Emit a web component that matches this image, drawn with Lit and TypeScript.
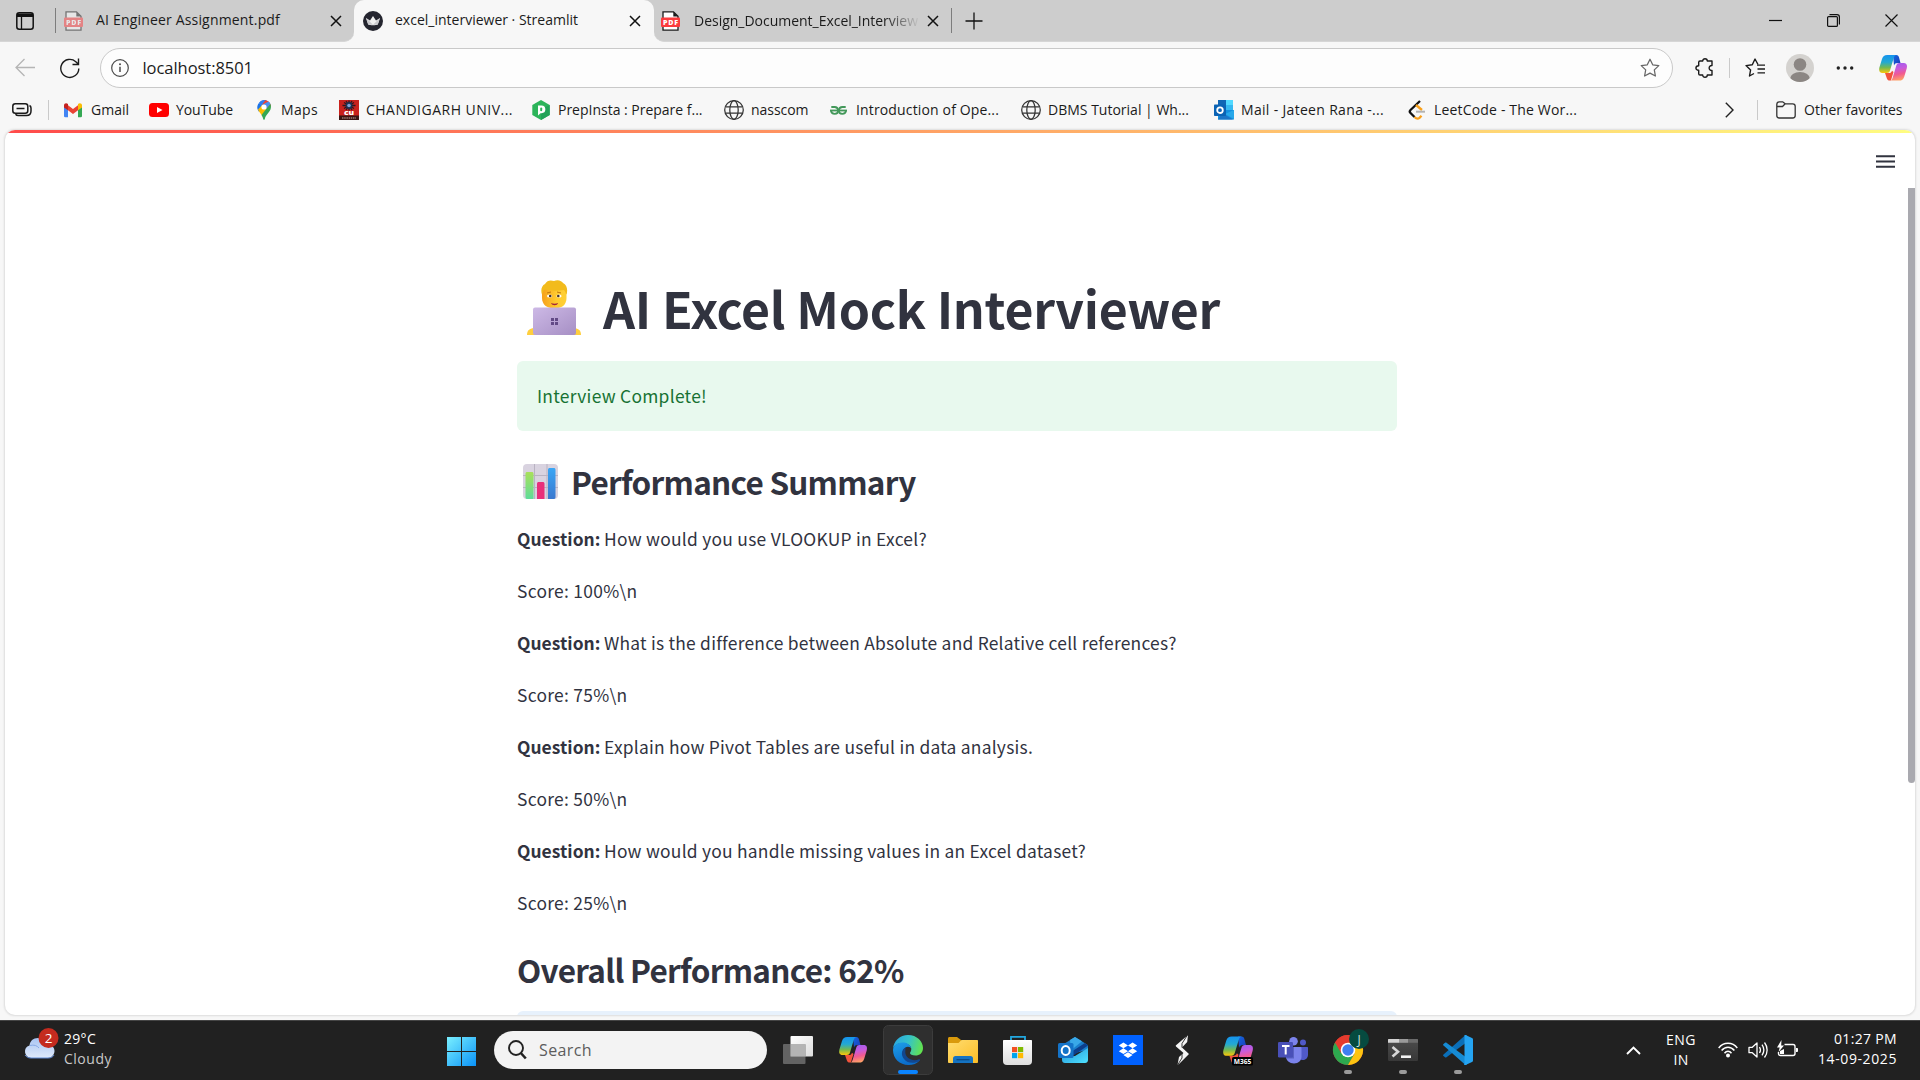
import { LitElement, html, svg, css } from "lit";
import { customElement, property } from "lit/decorators.js";

/** A single line of text tracked so that it spans a given width. */
@customElement("fit-text")
class FitText extends LitElement {
  @property() text = "";
  @property({ type: Number }) w = 0;
  static styles = css`
    :host { display: inline-block; white-space: pre; flex: none; }
  `;
  updated() {
    const el = this.renderRoot.querySelector("span") as HTMLElement;
    el.style.letterSpacing = "0px";
    const natural = el.getBoundingClientRect().width;
    if (this.w) {
      el.style.letterSpacing = `${(this.w - natural) / this.text.length}px`;
      this.style.width = `${this.w}px`;
    }
  }
  render() {
    return html`<span>${this.text}</span>`;
  }
}

const t = (text: string, w: number) => html`<fit-text .text=${text} .w=${w}></fit-text>`;

const icon = (w: number, h: number, body: unknown) =>
  html`<svg class="icon" width=${w} height=${h} viewBox="0 0 ${w} ${h}" fill="none">${body}</svg>`;

const closeIcon = icon(12, 12, svg`<path d="M1 1l10 10M11 1L1 11" stroke="#111" stroke-width="1.5"/>`);

const pdfIcon = icon(20, 20, svg`
  <path d="M2 .8h10.5L17 5.300V19.200H2z" fill="#fff" stroke="#1a1a1a" stroke-width="1.300"/>
  <path d="M12.300 .8v4.700H17z" fill="#1a1a1a"/>
  <rect x="0" y="6.500" width="19" height="9.500" rx="1" fill="#fb3b3d"/>
  <text x="9.500" y="13.900" text-anchor="middle" font-family="Open Sans" font-weight="800" font-size="7" fill="#fff" textLength="15">PDF</text>`);

const globe = icon(20, 20, svg`
  <g stroke="#333" stroke-width="1.250"><circle cx="10" cy="10" r="9.300"/><ellipse cx="10" cy="10" rx="4.200" ry="9.300"/><path d="M1.600 6.800h16.800M1.600 13.200h16.800"/></g>`);

const copilot = (id: string) => svg`
  <defs>
    <linearGradient id="${id}a" x1="0" y1="0" x2="0" y2="1"><stop offset="0" stop-color="#1593ef"/><stop offset=".4" stop-color="#23a9d2"/><stop offset=".7" stop-color="#74b950"/><stop offset="1" stop-color="#fcc70a"/></linearGradient>
    <linearGradient id="${id}b" x1=".3" y1="0" x2=".5" y2="1"><stop offset="0" stop-color="#a05cf0"/><stop offset=".35" stop-color="#c75bdc"/><stop offset=".65" stop-color="#f15a92"/><stop offset="1" stop-color="#ffa465"/></linearGradient>
    <linearGradient id="${id}c" x1="0" y1="0" x2="1" y2="1"><stop offset="0" stop-color="#1466e0"/><stop offset="1" stop-color="#1b3db8"/></linearGradient>
  </defs>
  <path d="M14 0h3.300c1.300 0 2.200.8 2.600 2.100L21.500 8h-3c-1.700 0-3 .8-3.500 2.600z" fill="url(#${id}c)"/>
  <path d="M6 18h4c1.500 0 2.500-.7 3-2.300L14.500 17l-2.600 8.600h-1.200c-1.500 0-2.400-.7-2.900-2.300z" fill="#f2533c"/>
  <path d="M8.200 0h9.600c-1.700.2-2.500 1.200-3 2.800L11 15.500c-.6 1.800-1.600 2.500-3.200 2.500H3.500C.5 18-.3 15.700.4 12.500L3 4C3.900 1.200 5.400 0 8.200 0z" fill="url(#${id}a)"/>
  <path d="M20.200 25.600h-9.400c1.500-.2 2.300-1.100 2.800-2.700L17.300 10.500c.5-1.700 1.500-2.500 3-2.500h4.400c3 0 3.800 2.200 3 5.400l-2.500 8.300c-.8 2.700-2.400 3.900-5 3.900z" fill="url(#${id}b)"/>`;

interface Bookmark { label: string; textWidth: number; cell: number; glyph: unknown; }

const bookmarks: Bookmark[] = [
  { label: "Gmail", textWidth: 38, cell: 85, glyph: icon(20, 20, svg`
    <path d="M0 5v11a1.300 1.300 0 0 0 1.300 1.300H4V8z" fill="#4285f4"/><path d="M14 8v9.300h2.700A1.300 1.300 0 0 0 18 16V5z" fill="#34a853"/>
    <path d="M4 5.300l5 3.800 5-3.800v5L9 14l-5-3.700z" fill="#ea4335"/><path d="M0 5.500C0 3 2.500 2.700 4 4v6.300L0 7.500z" fill="#c5221f"/><path d="M14 4c1.500-1.300 4-1 4 1.500v2l-4 2.800z" fill="#fbbc04"/>`) },
  { label: "YouTube", textWidth: 57, cell: 105, glyph: icon(20, 20, svg`<rect y="3" width="20" height="14" rx="3.500" fill="#f00"/><path d="M8 7l5.500 3L8 13z" fill="#fff"/>`) },
  { label: "Maps", textWidth: 37, cell: 85, glyph: icon(20, 20, svg`
    <path d="M4.700 11.500C3 9 2.500 6 5 3l5 4z" fill="#1a73e8"/><path d="M5 3c2-2.600 5-3.400 7.700-2.600L9 7.500z" fill="#4285f4"/>
    <path d="M10 0c3.500 0 6.800 2.700 7 6.500L9.500 10 8 5z" fill="#ea4335"/><path d="M5 3c1.500-2 4-3.200 6.500-2.900L7 5.800z" fill="#2f7cf0"/>
    <path d="M4 9.500L8.500 4.500 13 9l-5 6.500C6.500 13.300 5 12 4 9.500z" fill="#fbbc04"/>
    <path d="M16.300 3.700c1.200 2.700.8 5.300-1 7.800-2 2.800-4 4.500-4.600 7.800-.2.700-1.200.7-1.400 0C9 17.800 8.500 16.500 7.500 15z" fill="#34a853"/><path d="M14.500 1.500c1 .8 1.500 1.500 1.900 2.500L12.500 8.500 8 5z" fill="#4a90f0"/><circle cx="10" cy="7" r="2.600" fill="#fff"/>`) },
  { label: "CHANDIGARH UNIV...", textWidth: 147, cell: 192, glyph: icon(20, 20, svg`
    <rect width="20" height="20" fill="#c9211c"/><rect y="15.500" width="20" height="4.500" fill="#3a1512"/>
    <path d="M5 2.500l10 6M15 2.500l-10 6M3.500 5.500h13M10 .5v10M7 1l6 9M13 1L7 10" stroke="#2b1820" stroke-width="1.300"/><circle cx="10" cy="5.500" r="3.400" fill="#1d3150"/><circle cx="10" cy="5.500" r="1.800" fill="#7fa3d6"/>
    <text x="10" y="15" text-anchor="middle" font-family="Open Sans" font-weight="800" font-size="6.500" fill="#fff" textLength="10" lengthAdjust="spacingAndGlyphs">cu</text><path d="M3 18h14" stroke="#c9a8a0" stroke-dasharray="1.500 .7"/>`) },
  { label: "PrepInsta : Prepare f...", textWidth: 144.5, cell: 193, glyph: icon(20, 20, svg`
    <path d="M10 0l8.700 5v10L10 20l-8.700-5V5z" fill="#2cb45a"/><path d="M18.700 5v10L10 20V9z" fill="#21a257"/><path d="M7 15.500V5.500h3.500a3.700 3.700 0 0 1 0 7.700H9.500z" fill="#fff"/><rect x="9.200" y="7.500" width="2" height="3.700" rx="1" fill="#2cb45a"/>`) },
  { label: "nasscom", textWidth: 57.5, cell: 105, glyph: globe },
  { label: "Introduction of Ope...", textWidth: 143, cell: 192, glyph: icon(20, 20, svg`
    <g stroke="#43985a" stroke-width="1.800"><path d="M2.300 7h3.400c3 0 3.500 3.400 3.500 3.400 0 4.500-6.700 4.500-7.200.2"/><path d="M16.700 7h-3.400c-3 0-3.500 3.400-3.500 3.400 0 4.500 6.700 4.500 7.200.2"/><path d="M1 10.500h17"/></g>`) },
  { label: "DBMS Tutorial | Wh...", textWidth: 141, cell: 193, glyph: globe },
  { label: "Mail - Jateen Rana -...", textWidth: 143, cell: 193, glyph: icon(20, 20, svg`
    <rect x="4" width="15" height="10" fill="#35b8f1"/><rect x="4" width="8" height="5" fill="#1066b5"/><rect x="12" width="7" height="5" fill="#50d9ff"/><path d="M4 10h16v9.500H4z" fill="#1490df"/><path d="M20 10v9L11 14z" fill="#28a8ea"/><path d="M4 19.500h15L8 13z" fill="#1b75c7"/>
    <rect y="4.500" width="12" height="11.500" rx=".8" fill="#0b63b4"/><circle cx="6" cy="10.200" r="2.800" stroke="#fff" stroke-width="1.800"/>`) },
  { label: "LeetCode - The Wor...", textWidth: 143, cell: 180, glyph: icon(20, 20, svg`
    <path d="M13 1L3.500 10c-1 1-1 2 0 3l4 4" stroke="#111" stroke-width="2.300"/><path d="M9 5l6 5M7.500 17c2 2 3.500 2 5 .8l2-2" stroke="#f9a11c" stroke-width="2.300"/><path d="M9 11.700h9" stroke="#b3b3b3" stroke-width="2"/>`) },
];

const reviews = [
  { q: "How would you use VLOOKUP in Excel?", w: 323, score: "Score: 100%\\n", sw: 120.5 },
  { q: "What is the difference between Absolute and Relative cell references?", w: 572.5, score: "Score: 75%\\n", sw: 110.5 },
  { q: "Explain how Pivot Tables are useful in data analysis.", w: 429, score: "Score: 50%\\n", sw: 110.5 },
  { q: "How would you handle missing values in an Excel dataset?", w: 482, score: "Score: 25%\\n", sw: 110.5 },
];

interface App { active?: boolean; running?: boolean; art: unknown; }

const apps: App[] = [
  { art: svg`
    <defs><linearGradient id="tv" x1="0" y1="0" x2="1" y2="1"><stop stop-color="#fff"/><stop offset="1" stop-color="#dcdcdc"/></linearGradient></defs>
    <rect x="19.500" y="16" width="22.500" height="20.500" rx="1" fill="url(#tv)"/><rect x="12" y="24" width="22.500" height="20" rx="1" fill="#6f6f6f" fill-opacity=".85"/><path d="M19.500 24h15v12.500h-15z" fill="#b4b4b4"/>` },
  { art: svg`<g transform="translate(13 17)">${copilot("cp1")}</g>` },
  { active: true, art: svg`
    <defs><linearGradient id="eg1" x1="0" y1=".3" x2="1" y2=".5"><stop stop-color="#2aa6e0"/><stop offset=".5" stop-color="#35c2c9"/><stop offset="1" stop-color="#62e34f"/></linearGradient>
    <linearGradient id="eg2" x1="0" y1="0" x2=".4" y2="1"><stop stop-color="#1d9ee8"/><stop offset="1" stop-color="#0b6cc9"/></linearGradient></defs>
    <path d="M12 29C12.500 21 19 15 27 15c9 0 15 6.500 15 13 0 5-3.500 7.500-7.500 7.500-3.500 0-5.500-1.300-5.500-2.500 0-.8 1.300-1.500 1.300-4C30.300 25.500 26 23 21.500 23 16.500 23 12.500 26 12 29z" fill="url(#eg1)"/>
    <path d="M12 30c0-4.500 4.500-7.500 9.500-7.500 4 0 8 2 8.700 5.500-5-3.500-9.700 1.500-8.200 7 1.500 6 9 8.500 16.500 5.500C36 43.700 32 45 27.500 45 18.500 45 12 38.500 12 30z" fill="url(#eg2)"/>
    <path d="M24.500 27.500C20 30 20 35.500 23 39c3.500 4.500 10.500 5 15.700 1.700 1-.7.300-2-.8-1.400C31.500 42 24.500 38 24.300 32.500c0-2 .1-3.500.2-5z" fill="#12478f"/>` },
  { art: svg`
    <defs><linearGradient id="fo" x1="0" y1="0" x2="1" y2="1"><stop stop-color="#ffdd70"/><stop offset="1" stop-color="#fbbd27"/></linearGradient></defs>
    <path d="M12 18.500c0-.8.600-1.500 1.500-1.500h7.500l4 3v6H12z" fill="#d99a0c"/><path d="M12 23h10.500l3-3H41c.6 0 1 .4 1 1v21.300c0 .4-.4.700-1 .7H13c-.6 0-1-.3-1-.7z" fill="url(#fo)"/>
    <path d="M17 43v-4.500c0-1.500 1-2.500 2.500-2.500h15c1.500 0 2.500 1 2.500 2.500V43z" fill="#1573c2"/><path d="M20.500 39.700h13" stroke="#0b4a86" stroke-width="1.300"/>` },
  { art: svg`
    <defs><linearGradient id="st" x1="0" y1="0" x2="0" y2="1"><stop stop-color="#fff"/><stop offset="1" stop-color="#dedede"/></linearGradient></defs>
    <path d="M20 22v-5.200h14V22" stroke="#22a8e0" stroke-width="1.800"/><path d="M12 21c0-.6.400-1 1-1h27c.6 0 1 .4 1 1v20a4 4 0 0 1-4 4H16a4 4 0 0 1-4-4z" fill="url(#st)"/>
    <path d="M21 27h5.200v5.200H21z" fill="#f25022"/><path d="M27 27h5.200v5.200H27z" fill="#7fba00"/><path d="M21 33h5.200v5.200H21z" fill="#00a4ef"/><path d="M27 33h5.200v5.200H27z" fill="#ffb900"/>` },
  { art: svg`
    <defs><linearGradient id="ol" x1="0" y1="0" x2="1" y2="1"><stop stop-color="#2292d8"/><stop offset="1" stop-color="#4fe2ff"/></linearGradient></defs>
    <path d="M29 17l12 7.500c.7.500 1 1 1 1.800V30L16 36V26.300c0-.8.300-1.300 1-1.800z" fill="#1a7ecb"/><path d="M24 20l5-3 7 4.300-11 9z" fill="#39a9e8"/><path d="M39 23l3 2.500-16 11h-8z" fill="#0c3e8c"/>
    <path d="M42 28v12c0 1.700-1.300 3-3 3H19c-1.700 0-3-1.300-3-3v-3l13-1z" fill="url(#ol)"/><rect x="12" y="23" width="15.500" height="15" rx="1.500" fill="#1473c8"/><ellipse cx="19.700" cy="30.500" rx="4" ry="4.500" stroke="#fff" stroke-width="2"/>` },
  { art: svg`<rect x="12" y="15" width="30" height="30" fill="#0061ff"/>
    <path d="M22.400 22.500l4.600 2.900-4.600 2.900-4.600-2.900zM31.600 22.500l4.600 2.900-4.600 2.900-4.600-2.900zM22.400 28.300l4.600 2.900-4.600 2.900-4.600-2.900zM31.600 28.300l4.600 2.900-4.600 2.900-4.600-2.900zM27 32.200l4.600 2.900L27 38l-4.600-2.900z" fill="#fff"/>` },
  { art: svg`<path d="M32 15l-.8 7-5.200 5.500 7 6.500-9.500 9.500-2 1.500 1.500-8 4.500-4-7.500-6.500c-.4-.4-.4-.8 0-1.200z" fill="#f4f4f4"/><path d="M31.500 15l-5.500 8.500v4M21.500 45l4.500-7v-5" stroke="#222" stroke-width=".9"/>` },
  { art: svg`<g transform="translate(12 16.500) scale(1.070)">${copilot("cp2")}</g><rect x="21" y="37" width="21" height="8.500" rx="1.500" fill="#000"/>
    <text x="31.500" y="43.800" text-anchor="middle" font-family="Open Sans" font-weight="700" font-size="7.500" fill="#fff" textLength="17.500" lengthAdjust="spacingAndGlyphs">M365</text>` },
  { art: svg`
    <circle cx="27.500" cy="21.300" r="4.300" fill="#7b83eb"/><circle cx="37" cy="22.500" r="3" fill="#5059c9"/><path d="M32 27h9c.6 0 1 .4 1 1v6.500c0 3-2 5.500-5 5.500s-5-2-5-5z" fill="#5059c9"/>
    <path d="M20 27h14.500c.6 0 1 .4 1 1v8.500c0 4-3 7-7.500 7s-8-3-8-7z" fill="#7b83eb"/><path d="M20 27h8v11.500h-7.700z" fill="#5a62c3"/><rect x="12" y="22" width="15" height="15.500" rx="1.200" fill="#4950b8"/>
    <path d="M16 26h7.500M19.700 26v8.500" stroke="#fff" stroke-width="2"/>` },
  { running: true, art: svg`
    <circle cx="27" cy="30" r="15" fill="#e53b2e"/><path d="M14 22.500A15 15 0 0 0 27 45l6.500-11.300-6.500-3z" fill="#2da94f"/><path d="M27 45a15 15 0 0 0 13-22.500H27l6.500 11.300z" fill="#fdc411"/><path d="M14 22.500a15 15 0 0 1 26 0H27l-6.500 11.300z" fill="#e53b2e"/>
    <circle cx="27" cy="30" r="7.300" fill="#fff"/><circle cx="27" cy="30" r="5.700" fill="#3f7ff0"/><circle cx="38" cy="19" r="10" fill="#064b40"/>
    <text x="38" y="23.500" text-anchor="middle" font-family="Open Sans" font-size="12" fill="#cfe0dc">J</text>` },
  { running: true, art: svg`
    <defs><linearGradient id="tm" x1="0" y1="0" x2="0" y2="1"><stop stop-color="#4c4c4c"/><stop offset="1" stop-color="#383838"/></linearGradient></defs>
    <rect x="12" y="19" width="30" height="22" rx="1.200" fill="url(#tm)"/><path d="M12 22.800v-2.800c0-.6.400-1 1-1h10v3.800z" fill="#d3d3d3"/><path d="M23 19h9v3.800h-9z" fill="#9a9a9a"/><path d="M32 19h9c.6 0 1 .4 1 1v2.800H32z" fill="#6b6b6b"/>
    <path d="M16.500 27l5.500 4.700-5.500 4.700" stroke="#d6d6d6" stroke-width="2.600"/><path d="M25 36.700h10" stroke="#f2f2f2" stroke-width="2.600"/>` },
  { running: true, art: svg`
    <path d="M34.500 15L12.500 34.500c-.6.500-.6 1 0 1.500l1.500 1.300c.5.400 1 .4 1.500 0L36 22z" fill="#0b6fb8"/><path d="M34.500 45L12.500 25.500c-.6-.5-.6-1 0-1.500l1.500-1.300c.5-.4 1-.4 1.500 0L36 38z" fill="#168bd4"/>
    <path d="M34.500 15l6.500 3c.6.300 1 .8 1 1.500v21c0 .7-.4 1.200-1 1.500l-6.500 3c-.6.200-1.200 0-1.500-.5l1.500-.8V16.300z" fill="#25a4f2"/><path d="M34.500 15v30z" stroke="#25a4f2" stroke-width="2"/>` },
];

@customElement("app-root")
class AppRoot extends LitElement {
  static styles = css`
    :host { display: flex; flex-direction: column; width: 1920px; height: 1080px; overflow: hidden; background: #f7f7f7; color: #1b1b1b; font: 14px "Open Sans", "Noto Sans", sans-serif; }
    * { box-sizing: border-box; }
    .icon { display: block; flex: none; }
    .row { display: flex; align-items: center; }
    .tabs { height: 43px; flex: none; display: flex; background: #f7f7f7; font-size: 14px; }
    .strip { height: 42px; background: #cdcdcd; display: flex; align-items: center; border-bottom: 1px solid #d6d6d6; }
    .strip.left { width: 354px; border-radius: 0 0 10px 0; padding-left: 16px; }
    .strip.right { flex: 1; border-radius: 0 0 0 10px; padding-left: 7px; }
    .tabwrap { background: linear-gradient(#cdcdcd 20px, #f7f7f7 20px); display: flex; flex: 1; }
    .active { width: 300px; height: 43px; background: #f7f7f7; border-radius: 10px 10px 0 0; display: flex; align-items: center; padding: 0 0 2px 9px; }
    .tabs fit-text { line-height: 20px; margin-top: -2px; }
    .sep { width: 1px; height: 25px; background: #7d7d7d; flex: none; }
    .dim { opacity: .5; }
    .fade { width: 225px; flex: none; -webkit-mask-image: linear-gradient(90deg, #000 190px, transparent 226px); mask-image: linear-gradient(90deg, #000 190px, transparent 226px); }
    .controls { margin-left: auto; display: flex; align-items: center; gap: 45px; padding-right: 22px; }
    .toolbar { height: 50px; flex: none; display: flex; align-items: center; padding-left: 15px; }
    .address { width: 1573px; height: 40px; margin-left: 20px; background: #fdfdfd; border: 1px solid #c9c9c9; border-radius: 20px; display: flex; align-items: center; padding: 0 12px 0 10px; font-size: 16.5px; }
    .address fit-text { margin-left: 13.5px; line-height: 22px; }
    .bookmarks { height: 37px; flex: none; display: flex; align-items: center; padding-left: 12px; padding-bottom: 3px; }
    .bookmark { display: flex; align-items: center; gap: 7px; flex: none; }
    .bookmarks fit-text { line-height: 20px; margin-top: -1px; }
    .vline { width: 1px; height: 20px; background: #cacaca; flex: none; }
    .frame { flex: 1; min-height: 0; padding: 0 5px 5px; }
    .page { height: 885px; background: #fff; border-radius: 10px; overflow: hidden; box-shadow: 0 0 2px 1px #dcdcdc; display: flex; flex-direction: column; }
    .decor { height: 3px; flex: none; background: linear-gradient(90deg, #ff4b4b, #fffd80); }
    .head { height: 55px; flex: none; display: flex; justify-content: flex-end; padding: 22px 20px 0 0; }
    .scroller { flex: 1; min-height: 0; display: flex; overflow: hidden; }
    .content { width: 880px; margin-left: 512px; flex: none; display: flex; flex-direction: column; color: #31333f; font-family: "Noto Sans CJK JP", "Source Sans Pro", sans-serif; font-size: 17.400px; }
    .content > * { flex: none; }
    .thumb { width: 7px; height: 595px; background: #a9a9af; margin-left: auto; border-radius: 0 0 4px 4px; }
    h1, h2 { margin: 0; display: flex; align-items: center; white-space: pre; }
    h1 { margin-top: 86px; height: 66px; font-size: 50px; font-weight: 700; line-height: 66px; padding-left: 10px; }
    h1 fit-text { margin-left: 22px; }
    h2 { height: 42px; font-size: 31.500px; font-weight: 600; line-height: 42px; }
    h2.summary { margin-top: 29px; padding-left: 6px; }
    h2.summary fit-text { margin-left: 13px; }
    h2.overall { margin-top: 29px; }
    .success { margin-top: 21px; height: 70px; border-radius: 6px; background: #e8f9ee; color: #177233; padding: 19px 20px; line-height: 32px; }
    .qa { margin-top: 21px; }
    .line { height: 32px; line-height: 32px; margin-bottom: 20px; display: flex; gap: 3.500px; }
    .line:last-child { margin-bottom: 0; }
    .strong { font-weight: 600; }
    .info { margin-top: 21px; height: 70px; border-radius: 6px; background: #e7f1fc; }
    .taskbar { height: 60px; flex: none; background: #212121; border-top: 1px solid #454545; color: #fff; display: flex; align-items: center; }
    .weather { width: 446px; padding-left: 23px; display: flex; align-items: center; gap: 5px; }
    .weather .icon { margin-bottom: 15px; }
    .stack { display: flex; flex-direction: column; line-height: 20px; margin-bottom: 3px; }
    .stack.end { align-items: flex-end; }
    .stack.mid { align-items: center; margin-bottom: 2px; }
    .muted { color: #c9c9c9; }
    .search { width: 273px; height: 38px; border-radius: 19px; background: #f3f3f3; color: #5c5c5c; font-size: 16px; margin: -1px 4px 0 18px; display: flex; align-items: center; padding-left: 14px; gap: 12px; }
    .app { width: 55px; height: 60px; flex: none; margin-top: -1px; }
    .tray { margin-left: auto; padding-right: 23px; display: flex; align-items: center; }
  `;

  private renderTabs() {
    return html`<div class="tabs"><div class="strip left">
        ${icon(18, 18, svg`<rect x=".8" y=".8" width="16.400" height="16.400" rx="2.500" stroke="#111" stroke-width="1.500"/><path d="M1 1.500h16V5H1z" fill="#111"/><path d="M5.500 5v12" stroke="#111" stroke-width="1.300"/>`)}
        <div class="sep" style="margin-left:21px"></div>
        <div class="dim" style="margin-left:8px">${pdfIcon}</div>
        <div class="row" style="margin-left:12px;width:234px">${t("AI Engineer Assignment.pdf", 184)}</div>
        ${closeIcon}
      </div><div class="tabwrap"><div class="active">
        ${icon(20, 20, svg`<circle cx="10" cy="10" r="10" fill="#24252f"/><path d="M3 7l4 2.500L10 5l3 4.500L17 7l-2.200 6.500c-1.500 1-8 1-9.600 0z" fill="#f0f0f0"/><path d="M3 7l7 6.800L5.200 13.500zM17 7l-7 6.800 4.800-.3z" fill="#c8c8cc"/>`)}
        <div class="row" style="margin-left:12px;width:234px">${t("excel_interviewer · Streamlit", 183)}</div>
        ${closeIcon}
      </div><div class="strip right">
        ${pdfIcon}
        <div class="fade" style="margin-left:13px">${t("Design_Document_Excel_Interview", 224)}</div>
        <div style="margin-left:8px">${closeIcon}</div>
        <div class="sep" style="margin:0 13px 0 12px"></div>
        ${icon(18, 18, svg`<path d="M9 .5v17M.5 9h17" stroke="#111" stroke-width="1.300"/>`)}
        <div class="controls">
          ${icon(13, 13, svg`<path d="M0 6.500h13" stroke="#111" stroke-width="1.200"/>`)}
          ${icon(13, 13, svg`<rect x=".6" y="2.600" width="9.800" height="9.800" rx="1" stroke="#111" stroke-width="1.200"/><path d="M2.500 .6h7.500c1.500 0 2.400.9 2.400 2.400V10.500" stroke="#111" stroke-width="1.200"/>`)}
          ${icon(13, 13, svg`<path d="M.5.5l12 12M12.500.5l-12 12" stroke="#111" stroke-width="1.200"/>`)}
        </div>
      </div></div></div>`;
  }

  private renderToolbar() {
    return html`<div class="toolbar">
      ${icon(20, 20, svg`<path d="M9.500 1L1 9.500 9.500 18M1 9.500h19" stroke="#b5b5b5" stroke-width="1.300"/>`)}
      <div style="margin-left:25px">${icon(20, 22, svg`<path d="M18.800 11.500a9 9 0 1 1-3-6.800l2.700 2.600M18.500 1.500v6h-6" stroke="#1b1b1b" stroke-width="1.400"/>`)}</div>
      <div class="address">
        ${icon(18, 18, svg`<circle cx="9" cy="9" r="8.300" stroke="#4a4a4a" stroke-width="1.200"/><path d="M9 7.800v5.200" stroke="#4a4a4a" stroke-width="1.500"/><circle cx="9" cy="5.300" r="1" fill="#4a4a4a"/>`)}
        ${t("localhost:8501", 110.5)}
        <div style="margin-left:auto">${icon(20, 20, svg`<path d="M10 1.200l2.700 5.600 6.100.8-4.500 4.300 1.100 6.100L10 15.100 4.600 18l1.100-6.100L1.200 7.600l6.100-.8z" stroke="#666" stroke-width="1.250" stroke-linejoin="round"/>`)}</div>
      </div>
      <div style="margin-left:22px">${icon(19, 20, svg`<path d="M5 3h2.700c0-3 4.600-3 4.600 0H17v4.500c-3.800-.3-3.800 5.300 0 5V17h-4.700c0 3-4.600 3-4.600 0H5c-1 0-1.300-.5-1.300-1.300v-3.400C0 12.300 0 7.700 3.700 7.700V4.300C3.700 3.500 4 3 5 3z" stroke="#1b1b1b" stroke-width="1.400" stroke-linejoin="round"/>`)}</div>
      <div class="vline" style="margin:0 15px"></div>
      ${icon(20, 20, svg`<path d="M13 6.500L10 1 7.300 6.800 1 7.600l4.600 4.300L4.500 18l4.500-2.500" stroke="#1b1b1b" stroke-width="1.400" stroke-linejoin="round"/><path d="M12 7.200h8M12.500 11h7.500M12.500 14.800h7.500" stroke="#1b1b1b" stroke-width="1.300"/>`)}
      <div style="margin-left:21px">${icon(28, 28, svg`<defs><clipPath id="av"><circle cx="14" cy="14" r="14"/></clipPath></defs><circle cx="14" cy="14" r="14" fill="#d4d2cf"/><circle cx="14" cy="10.500" r="6.300" fill="#8b8683"/><ellipse cx="14" cy="25" rx="10" ry="7" fill="#8b8683" clip-path="url(#av)"/>`)}</div>
      <div style="margin-left:22px">${icon(18, 6, svg`<g fill="#222"><circle cx="2.300" cy="3" r="1.700"/><circle cx="9" cy="3" r="1.700"/><circle cx="15.700" cy="3" r="1.700"/></g>`)}</div>
      <div style="margin-left:25px">${icon(28, 26, copilot("cp0"))}</div>
    </div>`;
  }

  private renderBookmarks() {
    return html`<div class="bookmarks">
      ${icon(20, 14, svg`<rect x=".8" y=".8" width="15" height="9.500" rx="2.500" stroke="#1b1b1b" stroke-width="1.500"/><path d="M4.500 5.500h8" stroke="#1b1b1b" stroke-width="1.500"/><path d="M17.500 2.500c1 .5 1.500 1.200 1.500 2.500v3c0 3-1.500 4.500-4.500 4.500H6.500c-1.500 0-2.300-.4-3-1.300" stroke="#1b1b1b" stroke-width="1.500"/>`)}
      <div class="vline" style="margin:0 15px 0 16px"></div>
      ${bookmarks.map((b) => html`<div class="bookmark" style="width:${b.cell}px">${b.glyph}${t(b.label, b.textWidth)}</div>`)}
      <div style="margin-left:138px">${icon(9, 16, svg`<path d="M.8 .8L8 8 .8 15.200" stroke="#222" stroke-width="1.400"/>`)}</div>
      <div class="vline" style="margin:0 18px 0 23px"></div>
      <div class="bookmark" style="gap:8px">
        ${icon(20, 18, svg`<path d="M.8 3.500C.8 1.800 1.700.8 3.300.8h3.400l2.500 2h7.500c1.600 0 2.500 1 2.500 2.500v9.200c0 1.600-1 2.500-2.500 2.500H3.300C1.700 17 .8 16 .8 14.500zM1 5.500h5.500l2.700-2.700" stroke="#333" stroke-width="1.300"/>`)}
        ${t("Other favorites", 98.5)}
      </div>
    </div>`;
  }

  private renderPage() {
    return html`<div class="frame"><div class="page">
      <div class="decor"></div>
      <div class="head">${icon(19, 13, svg`<path d="M0 1.200h19M0 6.500h19M0 11.800h19" stroke="#31333f" stroke-width="1.900"/>`)}</div>
      <div class="scroller"><div class="content">
        <h1>${icon(54, 55, svg`
          <defs><linearGradient id="lap" x1="0" y1="0" x2="1" y2="1"><stop stop-color="#cdb9e6"/><stop offset="1" stop-color="#a68fc4"/></linearGradient>
          <linearGradient id="fc" x1="0" y1="0" x2="1" y2="0"><stop stop-color="#f6a01c"/><stop offset=".6" stop-color="#ffcb30"/><stop offset="1" stop-color="#ffd035"/></linearGradient></defs>
          <path d="M0 55c0-5 3-7 8-7h38c5 0 8 2 8 7z" fill="#ffcf3e"/><path d="M15 9h24.500v9c0 7-5 10.500-12 10.500S15 25 15 18z" fill="url(#fc)"/>
          <path d="M15 14.500c-1.500-4-.500-9 3-10.500 2-4 6-4 9-3 4-2 8 0 9 2 4 2 5 7 3.500 11.500-1-1.500-1-3-2.500-4.500-6 1-14 1-19-.5-2 1-2 3-3 5z" fill="#f2bb1c"/>
          <ellipse cx="22.500" cy="16" rx="2.600" ry="1.500" fill="#fff"/><ellipse cx="32" cy="16" rx="2.600" ry="1.500" fill="#fff"/><circle cx="23.200" cy="16" r="1.300" fill="#43302b"/><circle cx="31.300" cy="16" r="1.300" fill="#43302b"/>
          <path d="M20 13l4-1M30 12l4 1" stroke="#c1760d" stroke-width="1"/><path d="M24 23c2 1 5 1 7 0-.5 3-6 3-7 0z" fill="#a3243c"/>
          <rect x="6" y="27.500" width="43" height="27.500" rx="2" fill="url(#lap)"/><path d="M24 38h3v3h-3zM28 38h3v3h-3zM24 42h3v3h-3zM28 42h3v3h-3z" fill="#634a86"/>`)}${t("AI Excel Mock Interviewer", 617)}</h1>
        <div class="success">${t("Interview Complete!", 170)}</div>
        <h2 class="summary">${icon(35, 35, svg`
          <defs><linearGradient id="g1" x1="0" y1="0" x2="0" y2="1"><stop stop-color="#a9e05a"/><stop offset="1" stop-color="#5fdc9a"/></linearGradient><linearGradient id="g2" x1="0" y1="0" x2="0" y2="1"><stop stop-color="#3aa6f5"/><stop offset="1" stop-color="#3a78cf"/></linearGradient></defs>
          <rect width="35" height="35" rx="4" fill="#d9d3e0"/><path d="M11.500 0v35M24 0v35M0 11.500h35M0 23.500h35" stroke="#b9b3c2" stroke-width="1"/>
          <path d="M2.500 10c0-1.500.5-2 2-2h4c1.500 0 2 .5 2 2v25h-6c-1.500 0-2-.5-2-2z" fill="url(#g1)"/><path d="M14 20c0-1.500.5-2 2-2h3.500c1.500 0 2 .5 2 2v15H14z" fill="#e8307a"/><path d="M25 6c0-1.500.5-2 2-2h3.500c1.500 0 2 .5 2 2v27c0 1-.5 2-1.500 2h-6z" fill="url(#g2)"/>`)}${t("Performance Summary", 344.5)}</h2>
        <div class="qa">
          ${reviews.map((r) => html`
            <div class="line"><span class="strong">${t("Question:", 83.5)}</span>${t(r.q, r.w)}</div>
            <div class="line">${t(r.score, r.sw)}</div>`)}
        </div>
        <h2 class="overall">${t("Overall Performance: 62%", 386.5)}</h2>
        <div class="info"></div>
      </div><div class="thumb"></div></div>
    </div></div>`;
  }

  private renderTaskbar() {
    return html`<div class="taskbar">
      <div class="weather">
        ${icon(36, 32, svg`<defs><linearGradient id="cl" x1="0" y1="0" x2="0" y2="1"><stop stop-color="#a9c4f2"/><stop offset="1" stop-color="#dfeafb"/></linearGradient></defs>
          <path d="M8 31a7 6.500 0 0 1-1.500-12.500C7 14 10 11 15 11c5 0 8 3 9 6 5 .5 7.500 3.500 7.500 7S28.500 31 25 31z" fill="url(#cl)"/><path d="M2 28c1.500 2 3 3 6 3h17c3 0 5-1 6-3" stroke="#5f8ad6" stroke-width="1"/><path d="M7 18.500c4-1 7 0 9 2.500" stroke="#86a9e8"/>
          <circle cx="25.500" cy="11" r="10" fill="#c42b1f"/><text x="25.500" y="16" text-anchor="middle" font-family="Open Sans" font-size="13.500" fill="#fff">2</text>`)}
        <div class="stack">${t("29°C", 32)}<span class="muted">${t("Cloudy", 48)}</span></div>
      </div>
      ${icon(30, 30, svg`<defs><linearGradient id="wn" x1="0" y1="0" x2="30" y2="30" gradientUnits="userSpaceOnUse"><stop stop-color="#7ef3ff"/><stop offset="1" stop-color="#0a92f8"/></linearGradient></defs><path d="M1 1h14v14H1zM16 1h14v14H16zM1 16h14v14H1zM16 16h14v14H16z" fill="url(#wn)"/>`)}
      <div class="search">${icon(19, 20, svg`<circle cx="8" cy="8" r="7" stroke="#222" stroke-width="1.900"/><path d="M12.800 13l5 5.500" stroke="#222" stroke-width="2.600"/>`)}${t("Search", 53)}</div>
      ${apps.map((a) => html`<div class="app">${icon(55, 60, svg`
        ${a.active ? svg`<rect x="2.500" y="5.500" width="49" height="49" rx="5" fill="#2f2f2f" stroke="#3c3c3c"/><rect x="17" y="50" width="20" height="4" rx="2" fill="#0a84ff"/>` : ""}
        ${a.art}
        ${a.running ? svg`<rect x="23" y="50" width="8" height="4" rx="2" fill="#9b9b9b"/>` : ""}`)}</div>`)}
      <div class="tray">
        ${icon(15, 9, svg`<path d="M1 8l6.500-6.500L14 8" stroke="#fff" stroke-width="1.900"/>`)}
        <div class="stack mid" style="margin-left:25px">${t("ENG", 30)}${t("IN", 15)}</div>
        <div style="margin-left:22px;margin-bottom:2px">${icon(20, 16, svg`<g stroke="#fff" stroke-width="1.500"><path d="M.7 6C5.500-.3 14.500-.3 19.300 6"/><path d="M3.600 8.500c3.500-4.500 9.300-4.500 12.800 0"/><path d="M6.500 11.200c2-2.600 5-2.600 7 0"/></g><circle cx="10" cy="13.500" r="2" fill="#fff"/>`)}</div>
        <div style="margin-left:10px;margin-bottom:2px">${icon(20, 18, svg`<path d="M1 6.300h3.300L9 2v14l-4.700-4.300H1z" stroke="#fff" stroke-width="1.300" stroke-linejoin="round"/><path d="M11.500 6c1.300 2 1.300 4 0 6M14 3.700c2.300 3.300 2.300 7.300 0 10.600M16.500 1.500c3.500 4.500 3.500 10.500 0 15" stroke="#fff" stroke-width="1.300"/>`)}</div>
        <div style="margin-left:9px;margin-bottom:3px">${icon(21, 18, svg`<path d="M7.500 4.500H16c1.200 0 2 .8 2 2v7c0 1.200-.8 2-2 2H3.500c-1.200 0-2-.8-2-2V12" stroke="#fff" stroke-width="1.400"/><path d="M19 8h1c.6 0 1 .5 1 1v2c0 .5-.4 1-1 1h-1z" fill="#fff"/><path d="M3 14V11l4-2v5z" fill="#fff"/><path d="M4.500 0L0 7.500h2.700L1.500 12 7 5.500H4.200z" fill="#fff"/>`)}</div>
        <div class="stack end" style="margin-left:20px">${t("01:27 PM", 63)}${t("14-09-2025", 79)}</div>
      </div>
    </div>`;
  }

  render() {
    return html`${this.renderTabs()}${this.renderToolbar()}${this.renderBookmarks()}${this.renderPage()}${this.renderTaskbar()}`;
  }
}
